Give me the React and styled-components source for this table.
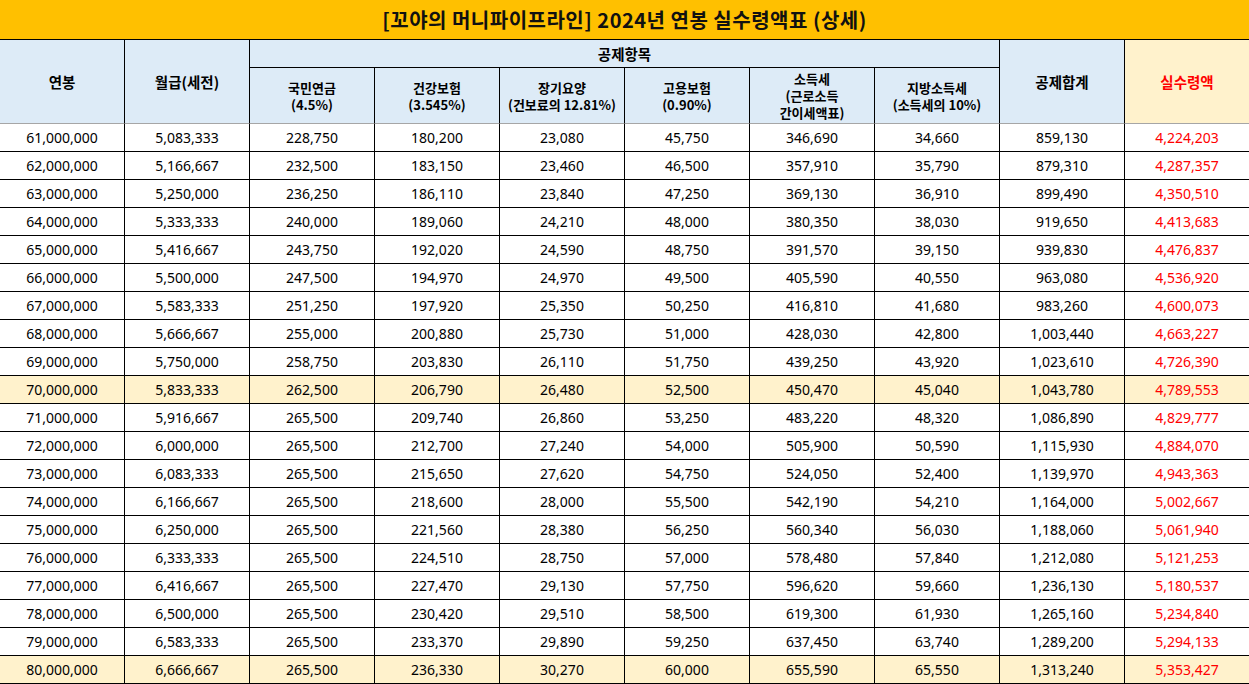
import styled, { createGlobalStyle } from "styled-components";

const GlobalStyle = createGlobalStyle`
  html, body {
    margin: 0;
    padding: 0;
    background: #ffffff;
  }
  body {
    font-family: "Noto Sans", "Noto Sans CJK KR", sans-serif;
    color: #000;
    overflow: hidden;
  }
`;

const Page = styled.div`
  width: 1249px;
  overflow: hidden;
`;

const Title = styled.div`
  height: 39px;
  border-bottom: 1px solid #000;
  background: #ffc000;
  display: flex;
  align-items: center;
  justify-content: center;
  font-family: "Noto Sans CJK KR", sans-serif;
  font-weight: 700;
  font-size: 20px;
  letter-spacing: 0.5px;
  color: #111;
`;

const Grid = styled.div`
  display: grid;
  grid-template-columns: repeat(10, 125px);
  grid-auto-rows: 28px;
  width: 1250px;
`;

const Head = styled.div`
  grid-column: ${(p) => p.col} / span ${(p) => p.span || 1};
  grid-row: ${(p) => p.row} / span ${(p) => p.rows || 1};
  background: ${(p) => (p.gold ? "#fff2cc" : "#ddebf7")};
  color: ${(p) => (p.gold ? "#ff0000" : "#000")};
  border-right: 1px solid #000;
  border-bottom: 1px solid ${(p) => (p.last ? "#a6a6a6" : "#000")};
  display: flex;
  flex-direction: column;
  align-items: center;
  justify-content: center;
  text-align: center;
  font-family: "Noto Sans CJK KR", sans-serif;
  font-weight: 700;
  font-size: ${(p) => (p.small ? "13px" : "14.5px")};
  box-sizing: border-box;
`;

const HeadLine = styled.span`
  display: block;
  height: 17px;
  line-height: 17px;
`;

const Row = styled.div`
  display: contents;
`;

const Cell = styled.div`
  background: ${(p) => (p.mark ? "#fff2cc" : "#fff")};
  color: ${(p) => (p.red ? "#ff0000" : "#000")};
  border-right: 1px solid #000;
  border-bottom: 1px solid #000;
  display: flex;
  align-items: center;
  justify-content: center;
  font-size: 14px;
  box-sizing: border-box;
`;

const subHeads = [
  ["국민연금", "(4.5%)"],
  ["건강보험", "(3.545%)"],
  ["장기요양", "(건보료의 12.81%)"],
  ["고용보험", "(0.90%)"],
  ["소득세", "(근로소득", "간이세액표)"],
  ["지방소득세", "(소득세의 10%)"],
];

const rows = [
  ["61,000,000", "5,083,333", "228,750", "180,200", "23,080", "45,750", "346,690", "34,660", "859,130", "4,224,203"],
  ["62,000,000", "5,166,667", "232,500", "183,150", "23,460", "46,500", "357,910", "35,790", "879,310", "4,287,357"],
  ["63,000,000", "5,250,000", "236,250", "186,110", "23,840", "47,250", "369,130", "36,910", "899,490", "4,350,510"],
  ["64,000,000", "5,333,333", "240,000", "189,060", "24,210", "48,000", "380,350", "38,030", "919,650", "4,413,683"],
  ["65,000,000", "5,416,667", "243,750", "192,020", "24,590", "48,750", "391,570", "39,150", "939,830", "4,476,837"],
  ["66,000,000", "5,500,000", "247,500", "194,970", "24,970", "49,500", "405,590", "40,550", "963,080", "4,536,920"],
  ["67,000,000", "5,583,333", "251,250", "197,920", "25,350", "50,250", "416,810", "41,680", "983,260", "4,600,073"],
  ["68,000,000", "5,666,667", "255,000", "200,880", "25,730", "51,000", "428,030", "42,800", "1,003,440", "4,663,227"],
  ["69,000,000", "5,750,000", "258,750", "203,830", "26,110", "51,750", "439,250", "43,920", "1,023,610", "4,726,390"],
  ["70,000,000", "5,833,333", "262,500", "206,790", "26,480", "52,500", "450,470", "45,040", "1,043,780", "4,789,553"],
  ["71,000,000", "5,916,667", "265,500", "209,740", "26,860", "53,250", "483,220", "48,320", "1,086,890", "4,829,777"],
  ["72,000,000", "6,000,000", "265,500", "212,700", "27,240", "54,000", "505,900", "50,590", "1,115,930", "4,884,070"],
  ["73,000,000", "6,083,333", "265,500", "215,650", "27,620", "54,750", "524,050", "52,400", "1,139,970", "4,943,363"],
  ["74,000,000", "6,166,667", "265,500", "218,600", "28,000", "55,500", "542,190", "54,210", "1,164,000", "5,002,667"],
  ["75,000,000", "6,250,000", "265,500", "221,560", "28,380", "56,250", "560,340", "56,030", "1,188,060", "5,061,940"],
  ["76,000,000", "6,333,333", "265,500", "224,510", "28,750", "57,000", "578,480", "57,840", "1,212,080", "5,121,253"],
  ["77,000,000", "6,416,667", "265,500", "227,470", "29,130", "57,750", "596,620", "59,660", "1,236,130", "5,180,537"],
  ["78,000,000", "6,500,000", "265,500", "230,420", "29,510", "58,500", "619,300", "61,930", "1,265,160", "5,234,840"],
  ["79,000,000", "6,583,333", "265,500", "233,370", "29,890", "59,250", "637,450", "63,740", "1,289,200", "5,294,133"],
  ["80,000,000", "6,666,667", "265,500", "236,330", "30,270", "60,000", "655,590", "65,550", "1,313,240", "5,353,427"],
];

function App() {
  return (
    <Page>
      <GlobalStyle />
      <Title>[꼬야의 머니파이프라인] 2024년 연봉 실수령액표 (상세)</Title>
      <Grid>
        <Head col={1} row={1} rows={3} last>연봉</Head>
        <Head col={2} row={1} rows={3} last>월급(세전)</Head>
        <Head col={3} row={1} span={6}>공제항목</Head>
        {subHeads.map((lines, i) => (
          <Head key={i} col={3 + i} row={2} rows={2} small last>
            {lines.map((l) => (
              <HeadLine key={l}>{l}</HeadLine>
            ))}
          </Head>
        ))}
        <Head col={9} row={1} rows={3} last>공제합계</Head>
        <Head col={10} row={1} rows={3} gold last>실수령액</Head>

        {rows.map((r) => {
          const mark = r[0] === "70,000,000" || r[0] === "80,000,000";
          return (
            <Row key={r[0]}>
              {r.map((v, j) => (
                <Cell key={j} mark={mark} red={j === 9}>
                  {v}
                </Cell>
              ))}
            </Row>
          );
        })}
      </Grid>
    </Page>
  );
}

export default App;
